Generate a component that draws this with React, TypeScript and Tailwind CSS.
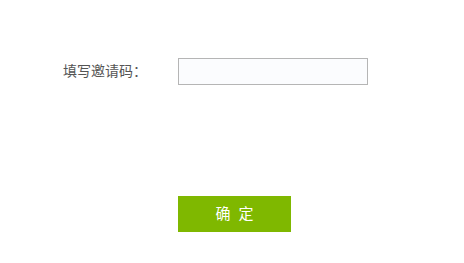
export default function App() {
  return (
    <div
      className="w-[464px] h-[263px] bg-white pt-[58px]"
      style={{ fontFamily: '"Liberation Sans", "Noto Sans CJK SC", sans-serif' }}
    >
      <div className="flex items-center pl-[63px]">
        <label className="w-[115px] text-[14px] leading-[27px] text-[#555555]">
          填写邀请码：
        </label>
        <input
          type="text"
          className="w-[190px] h-[27px] border border-[#b5b5b5] bg-[#fbfcfe] outline-none px-1 text-[13px]"
        />
      </div>
      <div className="pl-[178px] mt-[111px]">
        <button className="w-[113px] h-[36px] bg-[#7fb800] text-white text-[15px] tracking-[2px] pl-[2px]">
          确 定
        </button>
      </div>
    </div>
  );
}
